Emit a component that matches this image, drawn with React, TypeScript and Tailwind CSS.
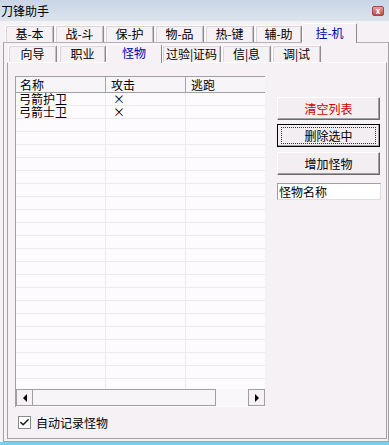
import { Check } from 'lucide-react'

const font = { fontFamily: '"Noto Sans CJK SC", "Liberation Sans", sans-serif' }

const topTabs = [
  { label: '基-本', w: 'w-[49px]' },
  { label: '战-斗', w: 'w-[49px]' },
  { label: '保-护', w: 'w-[49px]' },
  { label: '物-品', w: 'w-[49px]' },
  { label: '热-键', w: 'w-[49px]' },
  { label: '辅-助', w: 'w-[47px]' },
]

const subTabs = [
  { label: '向导', cls: 'ml-[4px] w-[49px]' },
  { label: '职业', cls: 'ml-[2px] w-[47px]' },
]
const subTabsAfter = [
  { label: '过验|证码', cls: 'w-[59px]' },
  { label: '信|息', cls: 'ml-[1px] w-[49px]' },
  { label: '调|试', cls: 'ml-[1px] w-[49px]' },
]

const rows = [
  { name: '弓箭护卫', atk: '×' },
  { name: '弓箭士卫', atk: '×' },
]

function Tab({ label, cls, h }: { label: string; cls: string; h: string }) {
  return (
    <div
      className={`${cls} ${h} flex items-center justify-center rounded-t-[2px] border-t border-l border-r border-t-white border-l-white border-r-[#8c8c8c] shadow-[inset_1px_1px_0_#d8d4d8,inset_-1px_0_0_#c4c0c4] text-[12px] leading-none text-black`}
    >
      {label}
    </div>
  )
}

function SelTab({ label, cls, h }: { label: string; cls: string; h: string }) {
  return (
    <div
      className={`${cls} ${h} relative z-10 -mb-[1px] flex items-center justify-center rounded-t-[2px] border-t border-l border-r border-t-white border-l-white border-r-[#8c8c8c] bg-[#f5f1f5] pb-[2px] text-[12px] leading-none text-[#0000b0]`}
    >
      {label}
    </div>
  )
}

function WinButton({ label, className = '', focused = false }: { label: string; className?: string; focused?: boolean }) {
  return (
    <div
      className={`flex h-[23px] w-[103px] items-center justify-center border ${
        focused ? 'border-black' : 'border-t-white border-l-white border-r-[#6a6a6a] border-b-[#6a6a6a]'
      } bg-[#f2eef2] shadow-[inset_-1px_-1px_0_#a0a0a0] text-[12px] leading-none ${className}`}
    >
      {focused ? (
        <div className="flex h-[17px] w-[95px] items-center justify-center border border-dotted border-[#333]">{label}</div>
      ) : (
        label
      )}
    </div>
  )
}

export default function App() {
  return (
    <div style={font} className="flex h-[445px] w-[389px] flex-col overflow-hidden bg-[#f5f1f5] text-black">
      <div className="flex h-[21px] items-center justify-between bg-linear-to-b from-[#c9d5e5] to-[#dce4ee] pl-[1px] pr-[5px]">
        <span className="text-[12px] leading-none">刀锋助手</span>
        <div className="flex h-[10px] w-[12px] items-center justify-center rounded-[2px] border border-[#9b4a4a] bg-linear-to-b from-[#e8a0a0] to-[#c04848] text-[8px] font-bold leading-none text-white">
          x
        </div>
      </div>

      <div className="flex h-[21px] items-end gap-[1px] pl-[5px]">
        {topTabs.map((t) => (
          <Tab key={t.label} label={t.label} cls={t.w} h="h-[17px]" />
        ))}
        <SelTab label="挂-机" cls="-ml-[1px] w-[55px]" h="h-[20px]" />
      </div>

      <div className="ml-[3px] flex h-[400px] w-[386px] flex-col border border-[#a4a0a4] border-t-[#b4b0b4]">
        <div className="flex h-[19px] items-end">
          {subTabs.map((t) => (
            <Tab key={t.label} label={t.label} cls={t.cls} h="h-[17px]" />
          ))}
          <SelTab label="怪物" cls="w-[56px]" h="h-[19px]" />
          {subTabsAfter.map((t) => (
            <Tab key={t.label} label={t.label} cls={t.cls} h="h-[17px]" />
          ))}
        </div>

        <div className="ml-[3px] flex h-[377px] w-[380px] flex-col border border-[#a4a0a4] border-t-white border-l-[#a4a0a4]">
          <div className="ml-[7px] mt-[13px] flex">
            <div className="flex h-[331px] w-[250px] flex-col border-l border-t border-[#a0a0a0] bg-[#fdfbfd]">
              <div className="flex h-[16px] border-b border-[#a0a0a0] bg-[#f8f5f8] text-[12px] leading-[15px]">
                <div className="w-[90px] border-r border-[#a8a8a8] pl-[4px]">名称</div>
                <div className="w-[80px] border-r border-[#a8a8a8] pl-[5px]">攻击</div>
                <div className="flex-1 pl-[5px]">逃跑</div>
              </div>
              <div className="h-[296px] overflow-hidden">
                {Array.from({ length: 23 }).map((_, i) => (
                  <div key={i} className="flex h-[13px] border-b border-[#ede9ed] text-[12px] leading-[12px]">
                    <div className="w-[90px] border-r border-[#ede9ed] pl-[3px]">{rows[i]?.name ?? ''}</div>
                    <div className="w-[80px] border-r border-[#ede9ed] pl-[7px]">{rows[i]?.atk ?? ''}</div>
                    <div className="flex-1" />
                  </div>
                ))}
              </div>
              <div className="flex h-[17px]">
                <div className="flex h-[17px] w-[17px] items-center justify-center border border-[#a0a0a0] bg-[#f5f1f5]">
                  <div className="h-0 w-0 border-y-[4px] border-r-[4px] border-y-transparent border-r-black" />
                </div>
                <div className="h-[17px] w-[183px] border border-l-0 border-[#a0a0a0] bg-[#f8f5f8]" />
                <div className="h-[17px] w-[32px] bg-[#faf7fa]" />
                <div className="flex h-[17px] w-[17px] items-center justify-center border border-[#a0a0a0] bg-[#f5f1f5]">
                  <div className="h-0 w-0 border-y-[4px] border-l-[4px] border-y-transparent border-l-black" />
                </div>
              </div>
            </div>

            <div className="ml-[12px] mt-[21px] flex flex-col">
              <WinButton label="清空列表" className="text-[#d00000]" />
              <WinButton label="删除选中" focused className="mt-[4px]" />
              <WinButton label="增加怪物" className="mt-[5px]" />
              <div className="mt-[8px] flex h-[17px] w-[104px] items-center border border-[#a0a0a0] border-b-[#e0dce0] border-r-[#e0dce0] bg-white pl-[1px] text-[12px] leading-none">
                怪物名称
              </div>
            </div>
          </div>

          <div className="ml-[10px] mt-[9px] flex items-center gap-[5px]">
            <div className="flex h-[13px] w-[13px] items-center justify-center border border-[#8a8a8a] bg-white">
              <Check className="h-[11px] w-[11px] text-[#222]" strokeWidth={3.5} />
            </div>
            <span className="text-[12px] leading-none">自动记录怪物</span>
          </div>
        </div>
      </div>

      <div className="h-[3px] bg-[#80cbe9]" />
    </div>
  )
}
